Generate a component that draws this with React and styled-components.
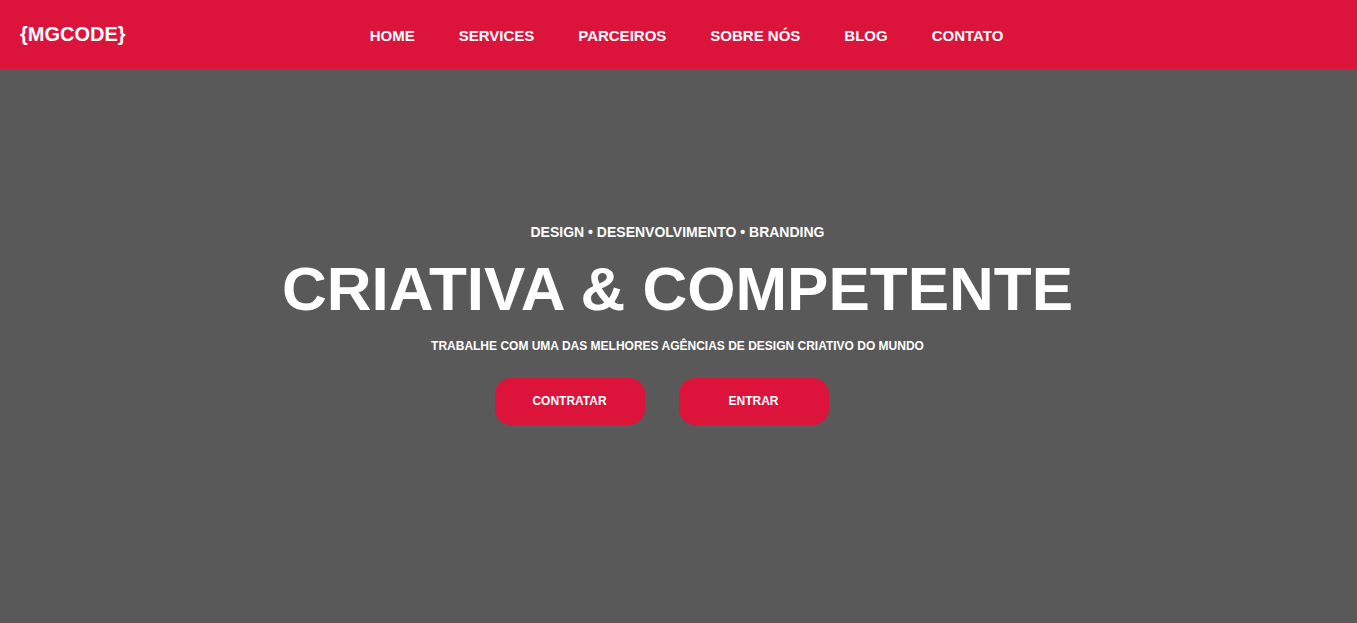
import React from "react";
import styled, { createGlobalStyle } from "styled-components";

const GlobalStyle = createGlobalStyle`
  * { box-sizing: border-box; margin: 0; padding: 0; }
  html, body, #root { height: 100%; }
  body {
    font-family: "Liberation Sans", Arial, sans-serif;
    font-weight: 700;
    color: #fff;
    background: #595959;
  }
`;

const Page = styled.div`
  min-height: 100%;
  display: flex;
  flex-direction: column;
`;

const Header = styled.header`
  display: grid;
  grid-template-columns: 1fr auto 1fr;
  align-items: baseline;
  padding: 22px 20px 23px;
  background: #dc143c;
`;

const Logo = styled.a`
  color: #fff;
  font-size: 20px;
  line-height: 24px;
  text-decoration: none;
`;

const NavList = styled.ul`
  display: flex;
  gap: 44px;
  padding-left: 16px;
  list-style: none;
  font-size: 15px;
  line-height: 20px;
`;

const NavLink = styled.a`
  color: #fff;
  text-decoration: none;
`;

const Hero = styled.main`
  flex: 1;
  display: flex;
  flex-direction: column;
  align-items: center;
  justify-content: center;
  padding: 0 2px 44px 0;
  text-align: center;
`;

const Kicker = styled.p`
  font-size: 14px;
  line-height: 16px;
`;

const Title = styled.h1`
  margin: 12px 0;
  font-size: 62px;
  line-height: 74px;
`;

const Tagline = styled.p`
  font-size: 12px;
  line-height: 16px;
`;

const Actions = styled.div`
  display: flex;
  gap: 34px;
  margin-top: 24px;
  padding-right: 32px;
`;

const Button = styled.button`
  width: 150px;
  height: 47px;
  border: 0;
  border-radius: 16px;
  background: #dc143c;
  color: #fff;
  font: 700 12px/16px "Liberation Sans", Arial, sans-serif;
  cursor: pointer;
`;

const links = ["HOME", "SERVICES", "PARCEIROS", "SOBRE NÓS", "BLOG", "CONTATO"];

export default function App() {
  return (
    <Page>
      <GlobalStyle />
      <Header>
        <Logo href="#">{"{MGCODE}"}</Logo>
        <nav>
          <NavList>
            {links.map((label) => (
              <li key={label}>
                <NavLink href="#">{label}</NavLink>
              </li>
            ))}
          </NavList>
        </nav>
      </Header>
      <Hero>
        <Kicker>DESIGN • DESENVOLVIMENTO • BRANDING</Kicker>
        <Title>CRIATIVA &amp; COMPETENTE</Title>
        <Tagline>TRABALHE COM UMA DAS MELHORES AGÊNCIAS DE DESIGN CRIATIVO DO MUNDO</Tagline>
        <Actions>
          <Button type="button">CONTRATAR</Button>
          <Button type="button">ENTRAR</Button>
        </Actions>
      </Hero>
    </Page>
  );
}
